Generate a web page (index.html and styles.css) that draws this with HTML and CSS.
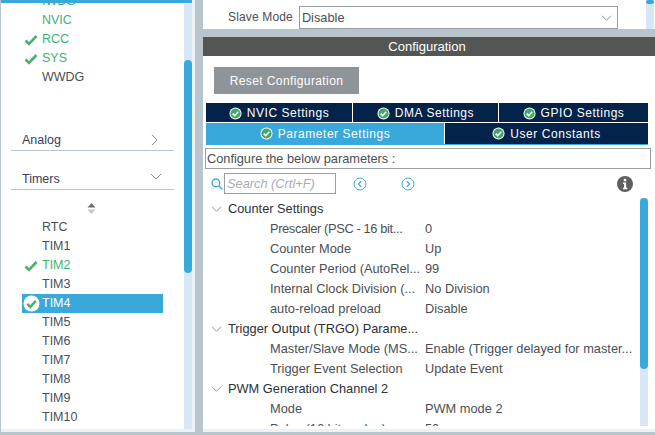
FILE: index.html
```html
<!DOCTYPE html>
<html lang="en">
<head>
    <meta charset="UTF-8">
    <title>Pinout and Configuration</title>
    <link rel="stylesheet" href="styles.css">
</head>
<body>
    <svg class="defs" width="0" height="0">
        <symbol id="tick" viewBox="0 0 14 12">
            <path d="M1.5 6.5 L5 10 L12.5 2" fill="none" stroke="#48b070" stroke-width="2.6"/>
        </symbol>
        <symbol id="badge" viewBox="0 0 14 14">
            <circle cx="7" cy="7" r="6.5" fill="#fff"/>
            <circle cx="7" cy="7" r="5.5" fill="#3fa868"/>
            <path d="M4 7.2 L6.2 9.3 L10 5.2" fill="none" stroke="#fff" stroke-width="1.7"/>
        </symbol>
        <symbol id="badge-white" viewBox="0 0 18 18">
            <circle cx="9" cy="9" r="8.5" fill="#fff"/>
            <path d="M4.5 9.3 L7.8 12.6 L13.6 6.2" fill="none" stroke="#48b070" stroke-width="2.6"/>
        </symbol>
        <symbol id="chev-down" viewBox="0 0 14 8">
            <path d="M1 1 L7 7 L13 1" fill="none" stroke="#6d7478" stroke-width="1"/>
        </symbol>
    </svg>

    <div class="app">
        <!-- left category list -->
        <aside class="sidebar">
            <div class="top-bar"></div>
            <div class="side-body">
                <div class="side-content">
                    <ul class="peri-list first">
                        <li class="peri on"><span class="mark"></span>IWDG</li>
                        <li class="peri on"><span class="mark"></span>NVIC</li>
                        <li class="peri on"><span class="mark"><svg class="tick"><use href="#tick"/></svg></span>RCC</li>
                        <li class="peri on"><span class="mark"><svg class="tick"><use href="#tick"/></svg></span>SYS</li>
                        <li class="peri"><span class="mark"></span>WWDG</li>
                    </ul>
                    <div class="category cat-analog">
                        <span>Analog</span>
                        <svg class="chev-right" viewBox="0 0 8 14"><path d="M1 1 L7 7 L1 13" fill="none" stroke="#6d7478" stroke-width="1"/></svg>
                    </div>
                    <div class="category cat-timers">
                        <span>Timers</span>
                        <svg class="chev-cat"><use href="#chev-down"/></svg>
                    </div>
                    <div class="sorter">
                        <svg width="9" height="11" viewBox="0 0 9 11"><path d="M4.5 0 L8.5 4.5 H0.5 Z" fill="#707070"/><path d="M0.5 6.5 H8.5 L4.5 11 Z" fill="#c6c6c6"/></svg>
                    </div>
                    <ul class="peri-list">
                        <li class="peri"><span class="mark"></span>RTC</li>
                        <li class="peri"><span class="mark"></span>TIM1</li>
                        <li class="peri on"><span class="mark"><svg class="tick"><use href="#tick"/></svg></span>TIM2</li>
                        <li class="peri"><span class="mark"></span>TIM3</li>
                        <li class="peri selected"><span class="mark"><svg class="badge-big"><use href="#badge-white"/></svg></span>TIM4</li>
                        <li class="peri"><span class="mark"></span>TIM5</li>
                        <li class="peri"><span class="mark"></span>TIM6</li>
                        <li class="peri"><span class="mark"></span>TIM7</li>
                        <li class="peri"><span class="mark"></span>TIM8</li>
                        <li class="peri"><span class="mark"></span>TIM9</li>
                        <li class="peri"><span class="mark"></span>TIM10</li>
                    </ul>
                </div>
                <div class="scroll side-scroll"><div class="thumb"></div></div>
            </div>
        </aside>

        <main class="main">
            <section class="mode-panel">
                <label class="mode-label">Slave Mode</label>
                <div class="select">
                    <span>Disable</span>
                    <svg class="chev-select"><use href="#chev-down"/></svg>
                </div>
                <div class="scroll mode-scroll"><div class="thumb"></div></div>
            </section>

            <section class="config">
                <h2 class="config-title">Configuration</h2>
                <div class="reset-row"><button class="reset">Reset Configuration</button></div>

                <div class="tabs">
                    <div class="tab-row">
                        <div class="tab w-a"><svg class="badge"><use href="#badge"/></svg>NVIC Settings</div>
                        <div class="tab w-b"><svg class="badge"><use href="#badge"/></svg>DMA Settings</div>
                        <div class="tab w-c"><svg class="badge"><use href="#badge"/></svg>GPIO Settings</div>
                    </div>
                    <div class="tab-row second">
                        <div class="tab active w-d"><svg class="badge"><use href="#badge"/></svg>Parameter Settings</div>
                        <div class="tab w-e"><svg class="badge"><use href="#badge"/></svg>User Constants</div>
                    </div>
                </div>

                <div class="hint">Configure the below parameters :</div>

                <div class="search-row">
                    <svg class="search-icon" viewBox="0 0 13 13"><circle cx="5.3" cy="5.3" r="4.2" fill="none" stroke="#39a9dc" stroke-width="1.4"/><path d="M8.4 8.4 L12.2 12.2" stroke="#39a9dc" stroke-width="1.6"/></svg>
                    <div class="search">Search (Crtl+F)</div>
                    <svg class="nav prev" viewBox="0 0 14 14"><circle cx="7" cy="7" r="6" fill="none" stroke="#39a9dc"/><path d="M8.2 4.2 L5.4 7 L8.2 9.8" fill="none" stroke="#39a9dc" stroke-width="1.2"/></svg>
                    <svg class="nav next" viewBox="0 0 14 14"><circle cx="7" cy="7" r="6" fill="none" stroke="#39a9dc"/><path d="M5.8 4.2 L8.6 7 L5.8 9.8" fill="none" stroke="#39a9dc" stroke-width="1.2"/></svg>
                    <svg class="info" viewBox="0 0 16 16"><circle cx="8" cy="8" r="8" fill="#5f5f5f"/><rect x="6.8" y="2.8" width="2.4" height="2.4" fill="#fff"/><path d="M5.9 6.6 H9.2 V11.8 H10.3 V13.2 H5.9 V11.8 H7 V8 H5.9 Z" fill="#fff"/></svg>
                </div>

                <div class="tree-wrap">
                    <div class="tree">
                        <div class="group"><svg class="chev-tree"><use href="#chev-down"/></svg>Counter Settings</div>
                        <div class="row"><span class="key tight">Prescaler (PSC - 16 bit...</span><span class="val">0</span></div>
                        <div class="row"><span class="key">Counter Mode</span><span class="val">Up</span></div>
                        <div class="row"><span class="key">Counter Period (AutoRel...</span><span class="val">99</span></div>
                        <div class="row"><span class="key">Internal Clock Division (...</span><span class="val">No Division</span></div>
                        <div class="row"><span class="key">auto-reload preload</span><span class="val">Disable</span></div>
                        <div class="group"><svg class="chev-tree"><use href="#chev-down"/></svg>Trigger Output (TRGO) Parame...</div>
                        <div class="row"><span class="key">Master/Slave Mode (MS...</span><span class="val">Enable (Trigger delayed for master...</span></div>
                        <div class="row"><span class="key">Trigger Event Selection</span><span class="val">Update Event</span></div>
                        <div class="group"><svg class="chev-tree"><use href="#chev-down"/></svg>PWM Generation Channel 2</div>
                        <div class="row"><span class="key">Mode</span><span class="val">PWM mode 2</span></div>
                        <div class="row"><span class="key">Pulse (16 bits value)</span><span class="val">50</span></div>
                    </div>
                    <div class="scroll tree-scroll"><div class="thumb"></div></div>
                </div>
            </section>
        </main>
    </div>
</body>
</html>
```

FILE: styles.css
```css
* {
    box-sizing: border-box;
}

html, body {
    margin: 0;
    padding: 0;
    height: 100%;
    overflow: hidden;
}

body {
    font-family: "Liberation Sans", Arial, sans-serif;
    font-size: 12.8px;
    color: #4b4f55;
    background-color: #b8c5cc;
}

.defs {
    position: absolute;
}

.app {
    display: flex;
    height: 432px;
}

/* sidebar */
.sidebar {
    width: 194px;
    margin-left: 1px;
    flex: none;
    display: flex;
    flex-direction: column;
    background-color: #fff;
    border-right: 3px solid #eef2f5;
    border-bottom: 3px solid #eef2f5;
    overflow: hidden;
}

.top-bar {
    height: 3px;
    flex: none;
    background-color: #39a9dc;
}

.side-body {
    flex: 1;
    display: flex;
    min-height: 0;
}

.side-content {
    flex: 1;
    overflow: hidden;
}

.peri-list {
    list-style: none;
    margin: 0;
    padding: 0 0 0 21px;
    font-size: 12.5px;
}

.peri-list.first {
    margin-top: -11px;
}

.peri {
    height: 19px;
    width: 141px;
    display: flex;
    align-items: center;
    line-height: 19px;
}

.peri.on {
    color: #3fb273;
}

.peri.selected {
    background-color: #39a9dc;
    color: #fff;
}

.mark {
    width: 20px;
    flex: none;
    display: flex;
    align-items: center;
}

.tick {
    width: 14px;
    height: 12px;
    margin-left: 2px;
}

.badge-big {
    width: 17px;
    height: 17px;
    margin-left: 1px;
}

.category {
    margin: 0 10px;
    width: 163px;
    display: flex;
    justify-content: space-between;
    align-items: center;
    height: 22px;
    padding: 0 12px 0 11px;
    border-bottom: 1px solid #b8c5cc;
    color: #39415a;
    font-size: 12.5px;
}

.cat-analog {
    margin-top: 42px;
}

.cat-timers {
    margin-top: 17px;
    padding-right: 12px;
}

.chev-right {
    width: 7px;
    height: 12px;
    margin-right: 4px;
}

.chev-cat {
    width: 12px;
    height: 7px;
    margin-bottom: 4px;
}

.sorter {
    height: 28px;
    padding-left: 86px;
    padding-top: 13px;
    display: flex;
    align-items: flex-start;
}

.scroll {
    background-color: #d8e7f5;
    position: relative;
}

.thumb {
    background-color: #39a9dc;
    border-radius: 4px;
}

.side-scroll {
    width: 8px;
    flex: none;
    margin-top: 1px;
}

.side-scroll .thumb {
    height: 213px;
    margin-top: 56px;
}

/* right side */
.main {
    margin-left: 8px;
    width: 452px;
    flex: none;
    display: flex;
    flex-direction: column;
}

.mode-panel {
    height: 29px;
    flex: none;
    background-color: #fff;
    display: flex;
    align-items: flex-start;
    padding-left: 25px;
    font-size: 12px;
}

.mode-label {
    padding-top: 10px;
    margin-right: 6px;
    letter-spacing: 0.15px;
}

.select {
    width: 319px;
    height: 23px;
    margin-top: 6px;
    border: 1px solid #9b9fa3;
    display: flex;
    align-items: center;
    justify-content: space-between;
    padding: 0 5px 0 2px;
    font-size: 12.8px;
}

.chev-select {
    width: 11px;
    height: 6px;
}

.mode-scroll {
    width: 8px;
    height: 29px;
    margin-left: 28px;
}

.mode-scroll .thumb {
    height: 4px;
}

.config {
    margin-top: 8px;
    flex: 1;
    min-height: 0;
    display: flex;
    flex-direction: column;
    background-color: #fff;
    border-bottom: 3px solid #eef2f5;
    padding-bottom: 3px;
}

.config-title {
    margin: 0;
    height: 19px;
    flex: none;
    background-color: #545654;
    color: #fff;
    font-size: 13px;
    font-weight: normal;
    line-height: 19px;
    text-align: center;
    padding-right: 4px;
}

.reset-row {
    padding: 11px 0 9px 11px;
    display: flex;
}

.reset {
    width: 145px;
    height: 27px;
    border: none;
    padding: 0;
    background-color: #8e9498;
    color: #fff;
    font-family: inherit;
    font-size: 12px;
    letter-spacing: 0.4px;
}

.tabs {
    margin-left: 3px;
    width: 442px;
    border-bottom: 1px solid #39a9dc;
    font-size: 12px;
}

.tab-row {
    display: flex;
    height: 19px;
    gap: 1px;
}

.tab-row.second {
    height: 21px;
    margin-top: 1px;
}

.tab {
    display: flex;
    align-items: center;
    justify-content: center;
    background-color: #03234b;
    color: #fff;
    letter-spacing: 0.55px;
}

.tab-row:first-child .tab {
    padding-top: 1px;
}

.tab.active {
    background-color: #39a9dc;
}

.w-a { width: 146px; }
.w-b { width: 145px; }
.w-c { width: 149px; }
.w-d { width: 238px; }
.w-e { width: 203px; }

.badge {
    width: 13px;
    height: 13px;
    margin-right: 5px;
}

.hint {
    margin: 3px 0 0 2px;
    width: 446px;
    height: 21px;
    flex: none;
    border: 1px solid #9b9fa3;
    line-height: 19px;
    padding-left: 1px;
    font-size: 12.8px;
    letter-spacing: -0.03px;
}

.search-row {
    display: flex;
    align-items: center;
    height: 21px;
    margin-top: 4px;
    padding-left: 8px;
    flex: none;
    font-size: 12.8px;
}

.search-icon {
    width: 12px;
    height: 12px;
    margin-top: 1px;
}

.search {
    width: 112px;
    height: 21px;
    margin-left: 1px;
    border: 1px solid #9b9fa3;
    color: #a9adb1;
    font-style: italic;
    line-height: 20px;
    padding-left: 2px;
}

.nav {
    width: 14px;
    height: 14px;
    margin-top: 1px;
}

.prev {
    margin-left: 17px;
}

.next {
    margin-left: 34px;
}

.info {
    width: 16px;
    height: 16px;
    margin-left: 202px;
    margin-top: 1px;
}

.tree-wrap {
    flex: 1;
    min-height: 0;
    display: flex;
    margin-top: 4px;
    overflow: hidden;
}

.tree {
    width: 437px;
    flex: none;
    margin-top: 1px;
}

.group, .row {
    height: 20px;
    line-height: 20px;
    display: flex;
    align-items: center;
    white-space: nowrap;
}

.group {
    color: #2c3138;
    padding-left: 8px;
}

.chev-tree {
    width: 11px;
    height: 6px;
    margin-right: 6px;
}

.key {
    width: 155px;
    margin-left: 67px;
    flex: none;
    overflow: hidden;
}

.key.tight {
    letter-spacing: -0.35px;
}

.scroll.tree-scroll {
    width: 8px;
    flex: none;
}

.tree-scroll .thumb {
    height: 171px;
}
```
